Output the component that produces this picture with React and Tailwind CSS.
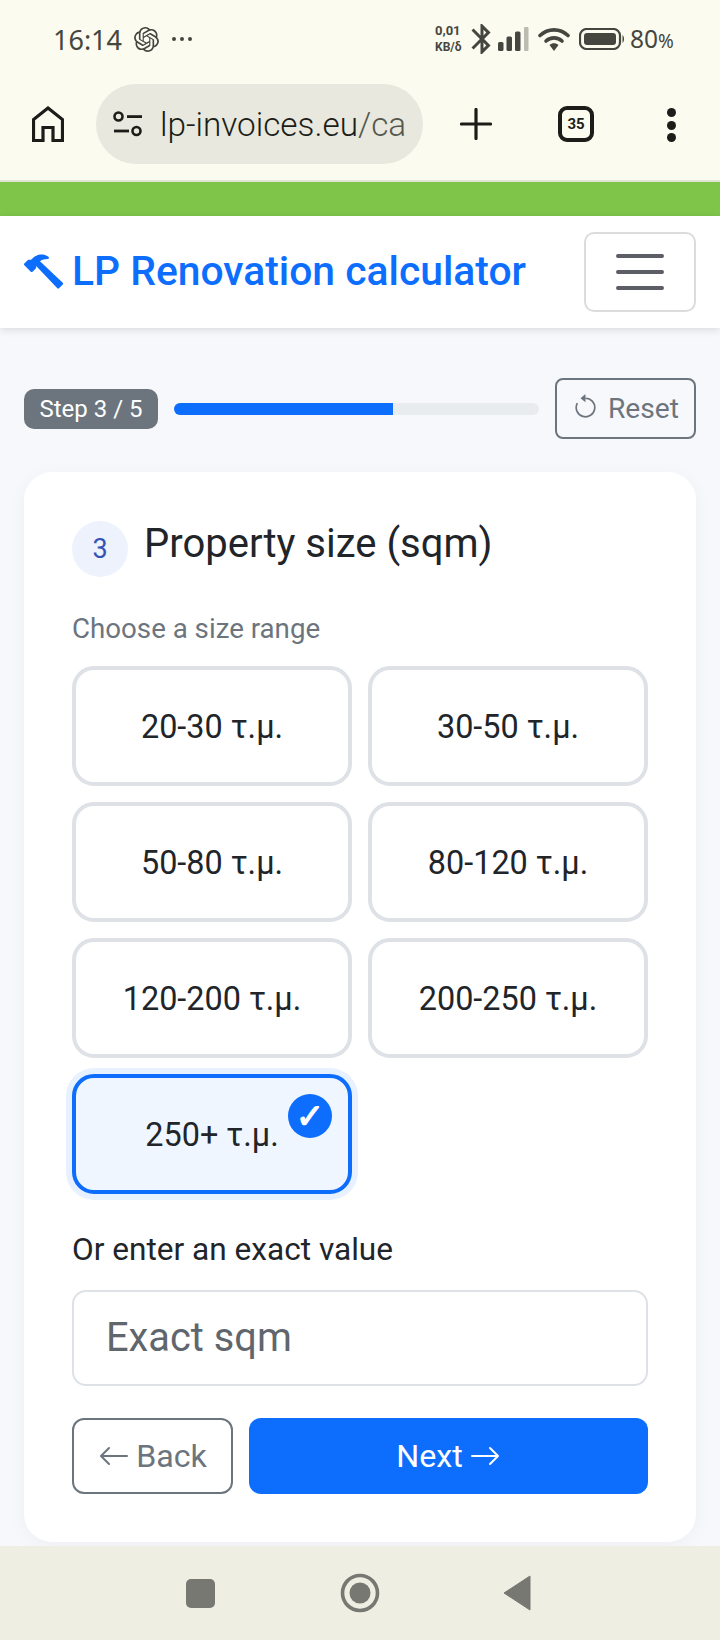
import React from 'react';
import { BsHammer, BsArrowCounterclockwise, BsArrowLeft, BsArrowRight } from 'react-icons/bs';
import { MdBluetooth } from 'react-icons/md';
import { SiOpenai } from 'react-icons/si';

const sizes = ['20-30 τ.μ.', '30-50 τ.μ.', '50-80 τ.μ.', '80-120 τ.μ.', '120-200 τ.μ.', '200-250 τ.μ.', '250+ τ.μ.'];
const selected = '250+ τ.μ.';

function StatusBar() {
    return (
        <div className="h-[78px] flex items-center text-[#45463f]">
            <span className="ml-[53px] text-[27px] leading-none font-['Noto_Sans',sans-serif] w-[69px]">16:14</span>
            <SiOpenai className="ml-[12px] w-[25px] h-[25px]" />
            <span className="ml-[13px] flex gap-[4px]">
                <i className="w-[4px] h-[4px] rounded-full bg-[#45463f]" />
                <i className="w-[4px] h-[4px] rounded-full bg-[#45463f]" />
                <i className="w-[4px] h-[4px] rounded-full bg-[#45463f]" />
            </span>
            <div className="ml-[243px] w-[30px] text-[13px] leading-[17px] font-bold font-['Roboto',sans-serif] flex flex-col">
                <span>0,01</span>
                <span className="text-[12px]">KB/δ</span>
            </div>
            <MdBluetooth className="ml-[-1px] w-[36px] h-[36px] mt-[-1px] shrink-0" />
            <svg className="ml-[-2px] shrink-0" width="31" height="24" viewBox="0 0 31 24">
                <rect x="0" y="15" width="5.5" height="9" rx="1.5" fill="#45463f" />
                <rect x="8.5" y="9.5" width="5.5" height="14.5" rx="1.5" fill="#45463f" />
                <rect x="17" y="4.5" width="5.5" height="19.5" rx="1.5" fill="#45463f" />
                <rect x="26" y="0" width="4.5" height="24" rx="1" fill="#bcbdb2" />
            </svg>
            <svg className="ml-[9px] shrink-0" width="32" height="24" viewBox="0 0 32 24">
                <path d="M2 8.5 C10 1 22 1 30 8.5" fill="none" stroke="#45463f" strokeWidth="3.6" strokeLinecap="round" />
                <path d="M8 14 C12.5 9.8 19.5 9.8 24 14" fill="none" stroke="#45463f" strokeWidth="3.6" strokeLinecap="round" />
                <path d="M11.5 18 C14 15.8 18 15.8 20.5 18 L16 24 Z" fill="#45463f" />
            </svg>
            <svg className="ml-[9px] shrink-0" width="46" height="22" viewBox="0 0 46 22">
                <rect x="1" y="1" width="40" height="20" rx="6.5" fill="none" stroke="#45463f" strokeWidth="2.2" />
                <rect x="5" y="5" width="32" height="12" rx="3" fill="#45463f" />
                <path d="M43.5 7 C45.5 8.5 45.5 13.5 43.5 15 Z" fill="#45463f" />
            </svg>
            <span className="ml-[5px] text-[24.5px] leading-none font-['Noto_Sans',sans-serif] whitespace-nowrap">
                80<span className="text-[19px]">%</span>
            </span>
        </div>
    );
}

function BrowserBar() {
    return (
        <div className="h-[102px] flex items-start pt-[6px] text-[#1c1d18]">
            <svg className="ml-[32px] mt-[22px] shrink-0" width="32" height="36" viewBox="0 0 32 36">
                <path d="M1.5 34.5 V13.5 L16 2 L30.5 13.5 V34.5 H21 V21.5 H11 V34.5 Z" fill="none" stroke="#1c1d18" strokeWidth="3.2" />
            </svg>
            <div className="ml-[32px] w-[327px] h-[80px] rounded-full bg-[#e8e8de] flex items-center shrink-0">
                <svg className="ml-[17px] shrink-0" width="30" height="26" viewBox="0 0 30 26">
                    <circle cx="5.5" cy="5.5" r="4" fill="none" stroke="#1c1d18" strokeWidth="2.6" />
                    <rect x="14" y="4.2" width="15" height="2.8" fill="#1c1d18" />
                    <circle cx="23.5" cy="20" r="4" fill="none" stroke="#1c1d18" strokeWidth="2.6" />
                    <rect x="1" y="18.6" width="15" height="2.8" fill="#1c1d18" />
                </svg>
                <span className="ml-[17px] text-[33.3px] leading-none font-['Roboto',sans-serif] font-[350] whitespace-nowrap mt-[1px]">
                    lp-invoices.eu<span className="text-[#55574e]">/ca</span>
                </span>
            </div>
            <svg className="ml-[37px] mt-[24px] shrink-0" width="32" height="32" viewBox="0 0 32 32">
                <path d="M16 1.5 V30.5 M1.5 16 H30.5" stroke="#1c1d18" strokeWidth="3.2" strokeLinecap="round" />
            </svg>
            <div className="ml-[66px] mt-[22px] w-[36px] h-[36px] rounded-[9px] border-[4px] border-[#1c1d18] flex items-center justify-center text-[15px] font-bold font-['Roboto',sans-serif] shrink-0">
                35
            </div>
            <div className="ml-[73px] mt-[24px] flex flex-col gap-[3.5px] shrink-0">
                <i className="w-[9px] h-[9px] rounded-full bg-[#1c1d18]" />
                <i className="w-[9px] h-[9px] rounded-full bg-[#1c1d18]" />
                <i className="w-[9px] h-[9px] rounded-full bg-[#1c1d18]" />
            </div>
        </div>
    );
}

function SizeOption({ label }) {
    const active = label === selected;
    return (
        <button
            className={
                active
                    ? 'relative h-[120px] pt-[2px] rounded-[22px] border-[4px] border-[#0d6efd] bg-[#eff6ff] text-[32.4px] text-[#212529] ring-[6px] ring-[#e7f1ff] flex items-center justify-center'
                    : 'relative h-[120px] pt-[2px] rounded-[22px] border-[4px] border-[#dee2e6] bg-white text-[32.4px] text-[#212529] flex items-center justify-center'
            }
        >
            {label}
            {active && (
                <span className="absolute top-[16px] right-[16px] w-[44px] h-[44px] rounded-full bg-[#0d6efd] text-white text-[34px] leading-none flex items-center justify-center font-['DejaVu_Sans',sans-serif] [-webkit-text-stroke:1.2px_white]">
                    ✓
                </span>
            )}
        </button>
    );
}

export default function App() {
    return (
        <div className="w-[720px] h-[1640px] overflow-hidden flex flex-col bg-[#f6f8fc] font-['Roboto',sans-serif]">
            {/* Phone and browser chrome */}
            <div className="h-[182px] bg-[#fbfbf0] border-b-2 border-[#e3e4d8] shrink-0">
                <StatusBar />
                <BrowserBar />
            </div>
            <div className="h-[34px] bg-[#7ec54a] shrink-0" />

            {/* Navbar */}
            <header className="h-[112px] bg-white shadow-[0_2px_8px_rgba(0,0,0,0.12)] flex items-center justify-between pl-[24px] pr-[24px] shrink-0 z-10">
                <div className="flex items-center text-[#0d6efd]">
                    <BsHammer className="w-[40px] h-[40px]" />
                    <span className="ml-[8px] mt-[-2px] text-[40.8px] leading-none font-[475] whitespace-nowrap">LP Renovation calculator</span>
                </div>
                <button className="w-[112px] h-[80px] rounded-[10px] border-2 border-[#dcdcdc] flex flex-col items-center justify-center gap-[12px]">
                    <i className="w-[48px] h-[4px] rounded-full bg-[#5c6066]" />
                    <i className="w-[48px] h-[4px] rounded-full bg-[#5c6066]" />
                    <i className="w-[48px] h-[4px] rounded-full bg-[#5c6066]" />
                </button>
            </header>

            <main className="px-[24px] pt-[50px]">
                {/* Progress */}
                <div className="flex items-center h-[61px]">
                    <span className="w-[134px] h-[40px] pt-[1px] rounded-[10px] bg-[#6c757d] text-white text-[24px] flex items-center justify-center shrink-0">
                        Step 3 / 5
                    </span>
                    <div className="ml-[16px] w-[365px] h-[12px] rounded-full bg-[#e9ecef] overflow-hidden shrink-0">
                        <div className="h-full w-[60%] bg-[#0d6efd]" />
                    </div>
                    <button className="ml-[16px] w-[141px] h-[61px] pt-[1px] rounded-[8px] border-2 border-[#6c757d] text-[#6c757d] text-[28.2px] font-[375] flex items-center justify-center gap-[9px] shrink-0">
                        <BsArrowCounterclockwise className="w-[27px] h-[27px] mt-[-3px]" />
                        Reset
                    </button>
                </div>

                {/* Card */}
                <section className="mt-[33px] h-[1070px] bg-white rounded-[28px] shadow-[0_4px_20px_rgba(0,0,0,0.04)] px-[48px] pt-[49px] pb-[48px]">
                    <div className="flex items-center">
                        <span className="w-[56px] h-[56px] rounded-full bg-[#edf2fd] text-[#3554b8] text-[27px] flex items-center justify-center shrink-0">3</span>
                        <h2 className="ml-[16px] text-[40px] leading-none font-[375] text-[#212529] mt-[-10px]">Property size (sqm)</h2>
                    </div>

                    <p className="mt-[32px] h-[40px] leading-[40px] text-[27.7px] font-[375] text-[#6c757d]">Choose a size range</p>

                    <div className="mt-[17px] grid grid-cols-2 gap-x-[16px] gap-y-[16px]">
                        {sizes.map((s) => (
                            <SizeOption key={s} label={s} />
                        ))}
                    </div>

                    <p className="mt-[36px] h-[40px] leading-[40px] text-[31.6px] font-[375] text-[#212529]">Or enter an exact value</p>

                    <div className="mt-[20px] h-[96px] rounded-[14px] border-2 border-[#dee2e6] flex items-center pl-[32px] text-[39.8px] font-[375] text-[#5f666d]">
                        Exact sqm
                    </div>

                    <div className="mt-[32px] flex gap-[16px]">
                        <button className="w-[161px] h-[76px] rounded-[12px] border-2 border-[#6c757d] text-[#6c757d] text-[32.2px] font-[375] flex items-center justify-center gap-[6px]">
                            <BsArrowLeft className="w-[32px] h-[32px]" />
                            Back
                        </button>
                        <button className="flex-1 h-[76px] rounded-[12px] bg-[#0d6efd] text-white text-[32.2px] font-[375] flex items-center justify-center gap-[6px]">
                            Next
                            <BsArrowRight className="w-[32px] h-[32px]" />
                        </button>
                    </div>
                </section>
            </main>

            {/* Android nav */}
            <div className="mt-auto h-[94px] bg-[#eeefe2] flex items-center shrink-0">
                <i className="ml-[186px] w-[29px] h-[29px] rounded-[5px] bg-[#777871]" />
                <svg className="ml-[125px]" width="40" height="40" viewBox="0 0 40 40">
                    <circle cx="20" cy="20" r="17.5" fill="none" stroke="#777871" strokeWidth="3.6" />
                    <circle cx="20" cy="20" r="10.5" fill="#777871" />
                </svg>
                <svg className="ml-[123px]" width="28" height="36" viewBox="0 0 28 36">
                    <path d="M1 18 L27 1 V35 Z" fill="#777871" stroke="#777871" strokeLinejoin="round" />
                </svg>
            </div>
        </div>
    );
}
